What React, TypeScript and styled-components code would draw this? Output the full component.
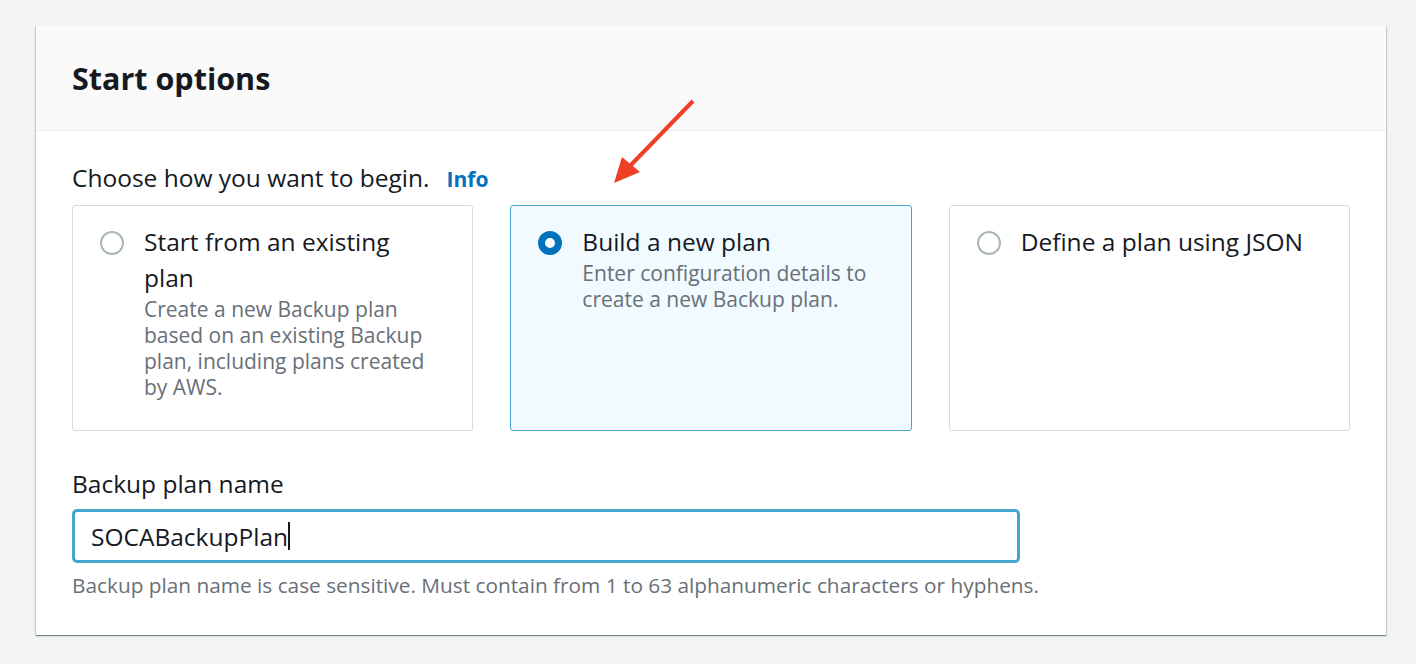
import React from "react";
import styled, { createGlobalStyle } from "styled-components";

const Global = createGlobalStyle`
  html, body { margin: 0; padding: 0; }
  body {
    background: #f2f3f3;
    font-family: "Open Sans", "Noto Sans", Arial, sans-serif;
    color: #16191f;
  }
`;

const Page = styled.div`
  position: relative;
  width: 1416px;
  height: 664px;
  padding: 26px 0 0 36px;
  box-sizing: border-box;
  overflow: hidden;
`;

const Card = styled.section`
  width: 1350px;
  background: #ffffff;
  box-shadow: 0 1px 1px 0 rgba(0, 28, 36, 0.3), 1px 1px 1px 0 rgba(0, 28, 36, 0.15),
    -1px 1px 1px 0 rgba(0, 28, 36, 0.15);
`;

const Header = styled.header`
  height: 104px;
  background: #fafafa;
  border-bottom: 1px solid #eaeded;
  display: flex;
  align-items: center;
  padding: 0 36px;
`;

const Title = styled.h2`
  margin: 0;
  font-size: 30.5px;
  font-weight: 700;
  color: #16191f;
`;

const Body = styled.div`
  padding: 30px 36px 35px;
`;

const Prompt = styled.div`
  display: flex;
  align-items: baseline;
  font-size: 24.5px;
  line-height: 34px;
  margin-bottom: 9px;
`;

const InfoLink = styled.a`
  margin-left: 17px;
  color: #0073bb;
  font-weight: 700;
  font-size: 21px;
  text-decoration: none;
`;

const Tiles = styled.div`
  display: grid;
  grid-template-columns: repeat(3, 1fr);
  column-gap: 37px;
`;

const Tile = styled.label<{ $selected?: boolean }>`
  height: 226px;
  box-sizing: border-box;
  display: flex;
  align-items: flex-start;
  gap: 20px;
  padding: 18px 30px 0 27px;
  border: 1px solid ${(p) => (p.$selected ? "#47a5cd" : "#d5dbdb")};
  border-radius: 3px;
  background: ${(p) => (p.$selected ? "#f1faff" : "#ffffff")};
`;

const Radio = styled.span<{ $checked?: boolean }>`
  flex: none;
  width: 24px;
  height: 24px;
  box-sizing: border-box;
  margin-top: 7px;
  border-radius: 50%;
  background: #ffffff;
  border: ${(p) => (p.$checked ? "7px solid #0073bb" : "2px solid #aab7b8")};
`;

const TileText = styled.div`
  display: flex;
  flex-direction: column;
  max-width: 285px;
`;

const TileTitle = styled.span`
  font-size: 24.5px;
  line-height: 36px;
  color: #16191f;
`;

const TileDesc = styled.span`
  font-size: 21px;
  line-height: 26px;
  color: #687078;
`;

const Field = styled.div`
  margin-top: 36px;
  display: flex;
  flex-direction: column;
`;

const FieldLabel = styled.div`
  font-size: 24.5px;
  line-height: 34px;
  margin-bottom: 8px;
`;

const InputBox = styled.div`
  width: 948px;
  height: 54px;
  box-sizing: border-box;
  border: 3px solid #47a5cd;
  border-radius: 5px;
  display: flex;
  align-items: center;
  padding: 0 16px;
  font-size: 24.5px;
  color: #16191f;
  background: #ffffff;
`;

const Caret = styled.span`
  display: inline-block;
  width: 2px;
  height: 28px;
  background: #16191f;
`;

const Hint = styled.div`
  margin-top: 7px;
  font-size: 20.8px;
  line-height: 30px;
  color: #687078;
`;

const ArrowLayer = styled.svg`
  position: absolute;
  left: 0;
  top: 0;
  pointer-events: none;
`;

const options = [
  {
    title: "Start from an existing plan",
    desc: "Create a new Backup plan based on an existing Backup plan, including plans created by AWS.",
    selected: false,
  },
  {
    title: "Build a new plan",
    desc: "Enter configuration details to create a new Backup plan.",
    selected: true,
  },
  { title: "Define a plan using JSON", desc: "", selected: false },
];

export default function App() {
  return (
    <>
      <Global />
      <Page>
        <Card>
          <Header>
            <Title>Start options</Title>
          </Header>
          <Body>
            <Prompt>
              Choose how you want to begin.
              <InfoLink href="#">Info</InfoLink>
            </Prompt>
            <Tiles>
              {options.map((o) => (
                <Tile key={o.title} $selected={o.selected}>
                  <Radio $checked={o.selected} />
                  <TileText>
                    <TileTitle>{o.title}</TileTitle>
                    {o.desc && <TileDesc>{o.desc}</TileDesc>}
                  </TileText>
                </Tile>
              ))}
            </Tiles>
            <Field>
              <FieldLabel>Backup plan name</FieldLabel>
              <InputBox>
                SOCABackupPlan
                <Caret />
              </InputBox>
              <Hint>
                Backup plan name is case sensitive. Must contain from 1 to 63 alphanumeric characters or
                hyphens.
              </Hint>
            </Field>
          </Body>
        </Card>
        <ArrowLayer width="1416" height="664" viewBox="0 0 1416 664">
          <line x1="693" y1="101" x2="628" y2="168" stroke="#ee4026" strokeWidth="4" strokeLinecap="butt" />
          <polygon points="614,183 622,157 640,172" fill="#ee4026" />
        </ArrowLayer>
      </Page>
    </>
  );
}
